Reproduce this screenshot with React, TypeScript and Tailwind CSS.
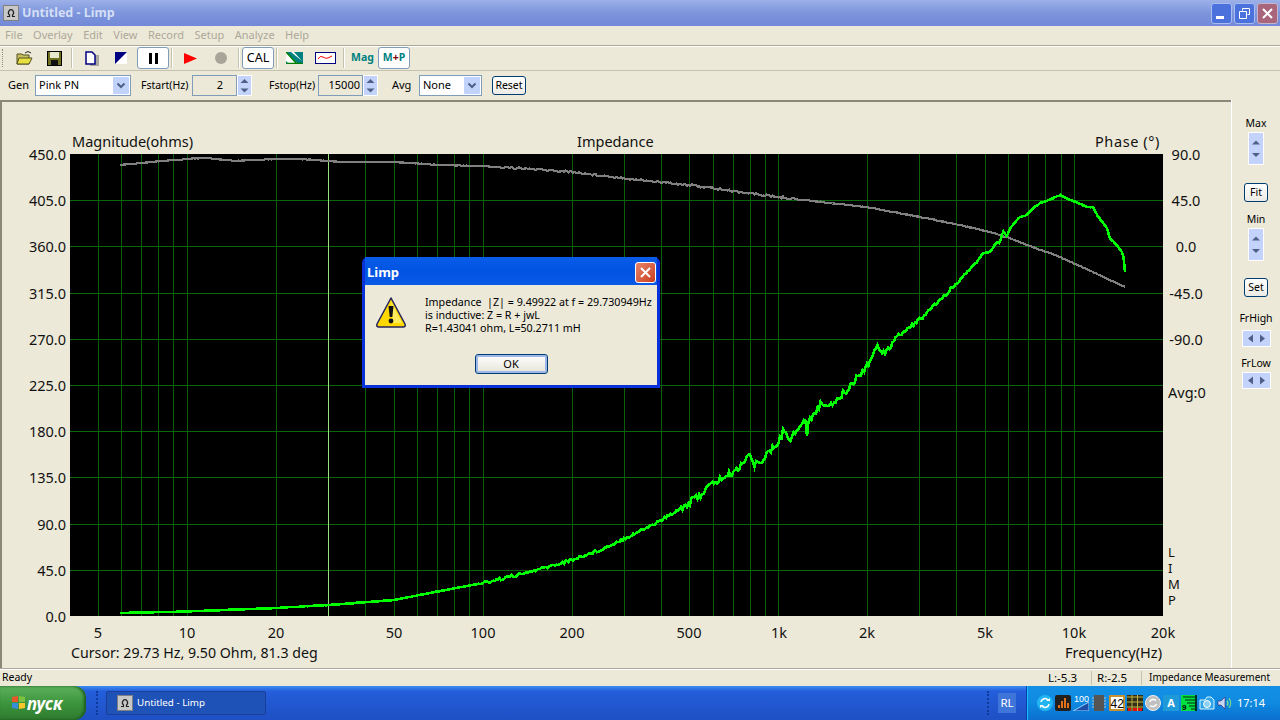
import React from "react";

const X0 = 70;
const Y0 = 154;
const PW = 1093;
const PH = 462;

const freqX = (f: number) => Math.round(187 + 295.7 * Math.log10(f / 10) - X0);

const vLines = [5, 6, 7, 8, 9, 10, 20, 30, 40, 50, 60, 70, 80, 90, 100, 200, 300, 400, 500, 600, 700, 800, 900, 1000, 2000, 3000, 4000, 5000, 6000, 7000, 8000, 9000, 10000];
const yTicks = ["450.0", "405.0", "360.0", "315.0", "270.0", "225.0", "180.0", "135.0", "90.0", "45.0", "0.0"];
const xLabels: [string, number][] = [["5", 98], ["10", 187], ["20", 276], ["50", 394], ["100", 483], ["200", 572], ["500", 689], ["1k", 779], ["2k", 867], ["5k", 985], ["10k", 1074], ["20k", 1163]];

const greenKeys: [number, number][] = [[120, 613], [187, 611.5], [276, 608], [328, 605], [394, 600], [440, 591], [483, 583], [530, 572], [572, 560], [600, 550], [640, 531], [660, 521], [689, 503], [700, 495], [712, 484], [737, 470], [749, 453], [754, 466], [767, 455], [778, 443], [785, 428], [790, 440], [800, 425], [806, 420], [807, 437], [809, 420], [820, 405], [835, 402], [845, 392], [867, 365], [878, 346], [884, 352], [900, 335], [925, 315], [955, 285], [967, 272], [977, 262], [983, 253], [990, 252], [997, 242], [1000, 243], [1003, 230], [1007, 237], [1010, 228], [1015, 222], [1020, 217], [1027, 215], [1033, 208], [1040, 203], [1050, 200], [1060, 195], [1067, 198], [1073, 201], [1087, 207], [1093, 207], [1097, 215], [1107, 228], [1110, 238], [1118, 247], [1123, 253], [1125, 272]];
const grayKeys: [number, number][] = [[120, 165], [140, 163], [187, 159], [205, 158], [235, 161], [276, 159], [300, 159], [328, 161], [345, 162], [394, 162], [440, 165], [483, 166], [530, 169], [572, 172], [640, 180], [689, 185], [740, 192], [779, 197], [830, 203], [867, 207], [925, 218], [960, 225], [977, 229], [993, 233], [1010, 238], [1027, 245], [1060, 257], [1093, 272], [1125, 287]];

function lerp(keys: [number, number][], x: number) {
  for (let i = 1; i < keys.length; i++) {
    if (x <= keys[i][0]) {
      const [a, b] = keys[i - 1];
      const [c, d] = keys[i];
      return b + ((d - b) * (x - a)) / (c - a);
    }
  }
  return keys[keys.length - 1][1];
}

// small repeatable noise so the traces look measured
function rand(i: number) {
  const s = Math.sin(i * 12.9898) * 43758.5453;
  return s - Math.floor(s) - 0.5;
}

function curve(keys: [number, number][], amp: (x: number) => number) {
  const pts: string[] = [];
  const end = keys[keys.length - 1][0];
  for (let x = keys[0][0], i = 0; x <= end; x += 1.5, i++) {
    pts.push(`${(x - X0).toFixed(1)},${(lerp(keys, x) + rand(i) * amp(x) - Y0).toFixed(1)}`);
  }
  return pts.join(" ");
}

const greenPts = curve(greenKeys, (x) => (x < 480 ? 0.3 : x < 680 ? 3 : x < 900 ? 7 : x < 960 ? 3.5 : 1));
const grayPts = curve(grayKeys, (x) => (x < 500 ? 0.5 : x < 800 ? 2 : 0.7));

function Chart() {
  return (
    <svg width={PW} height={PH} className="block shrink-0 bg-black" shapeRendering="crispEdges">
      {vLines.map((f) => (
        <line key={f} x1={freqX(f) + 0.5} x2={freqX(f) + 0.5} y1={0} y2={PH} stroke="#0a5f0a" strokeWidth={1} />
      ))}
      {yTicks.slice(1, -1).map((_, i) => (
        <line key={i} x1={0} x2={PW} y1={Math.round(46.2 * (i + 1)) + 0.5} y2={Math.round(46.2 * (i + 1)) + 0.5} stroke="#0a660a" strokeWidth={1} />
      ))}
      <line x1={258.5} x2={258.5} y1={0} y2={PH} stroke="#98e080" strokeWidth={1} />
      <polyline points={grayPts} fill="none" stroke="#808080" strokeWidth={2.2} />
      <polyline points={greenPts} fill="none" stroke="#00ff00" strokeWidth={2.6} />
    </svg>
  );
}

function UpDown({ w = 15, h = 21 }: { w?: number; h?: number }) {
  return (
    <svg width={w} height={h} className="block shrink-0">
      <rect width={w} height={h} fill="#fff" />
      <rect x={1} y={1} width={w - 2} height={h - 2} fill="#c4d3fb" />
      <path d={`M${w / 2 - 4} ${h * 0.38}l4-4 4 4z`} fill="#4d6185" />
      <path d={`M${w / 2 - 4} ${h * 0.64}l4 4 4-4z`} fill="#4d6185" />
    </svg>
  );
}

function LeftRight() {
  return (
    <svg width={29} height={17} className="block">
      <rect width={29} height={17} fill="#fff" />
      <rect x={1} y={1} width={27} height={15} fill="#c4d3fb" />
      <path d="M11 4.500l-5 4 5 4z" fill="#4d6185" />
      <path d="M18 4.500l5 4-5 4z" fill="#4d6185" />
    </svg>
  );
}

function Combo({ text, w }: { text: string; w: string }) {
  return (
    <div className={`flex h-[21px] items-center justify-between border border-[#7f9db9] bg-white pr-px pl-[3px] text-[11px] text-black ${w}`}>
      <span>{text}</span>
      <svg width={16} height={17} className="block">
        <rect width={16} height={17} rx={1} fill="#c1d3fb" />
        <path d="M4.500 6.500l3.500 3.500 3.500-3.500" fill="none" stroke="#4d6185" strokeWidth={2} />
      </svg>
    </div>
  );
}

function XpButton({ children, className }: { children: React.ReactNode; className: string }) {
  return (
    <div className={`flex items-center justify-center rounded-[3px] border border-[#003c74] bg-gradient-to-b from-white to-[#ecebe5] text-black ${className}`}>
      {children}
    </div>
  );
}

function Sep() {
  return <div className="h-[20px] w-[2px] shrink-0 border-r border-white bg-[#c5c2b0]" />;
}

function ToolButton({ children, className }: { children: React.ReactNode; className: string }) {
  return (
    <div className={`flex h-[22px] shrink-0 items-center justify-center rounded-[3px] border border-[#7f9db9] bg-white ${className}`}>
      {children}
    </div>
  );
}

function AppIcon({ size = 16 }: { size?: number }) {
  return (
    <svg width={size} height={size} viewBox="0 0 16 16" className="block shrink-0">
      <rect width={16} height={16} fill="#c8c8c8" />
      <rect x={0.5} y={0.5} width={15} height={15} fill="none" stroke="#808080" />
      <path d="M4 11.500h2.500v-1.500a2.500 3 0 1 1 3 0v1.500h2.500" fill="none" stroke="#202020" strokeWidth={1.2} />
    </svg>
  );
}

function WarningIcon() {
  return (
    <svg width={32} height={33} viewBox="0 0 32 33" className="block shrink-0">
      <path d="M16 2L30 28q1 3-2 3H4q-3 0-2-3z" fill="#ffd800" stroke="#23235f" strokeWidth={1.5} strokeLinejoin="round" />
      <path d="M16 5L27 27H18z" fill="#ffec5c" />
      <path d="M13.500 10h5l-1.200 11h-2.600z" fill="#111" />
      <circle cx={16} cy={25} r={2.400} fill="#111" />
    </svg>
  );
}

function Tray() {
  return (
    <div className="flex h-full w-[254px] items-center border-l border-[#0a3ea8] bg-gradient-to-b from-[#1390e6] via-[#0f8ae0] to-[#0c6fd0] pl-[10px] shadow-[inset_1px_0_0_#18bbff]">
      <svg width={16} height={16} className="ml-0 block shrink-0">
        <circle cx={8} cy={8} r={8} fill="#23b5f2" />
        <path d="M4 7a4 4 0 0 1 7-2M12 9a4 4 0 0 1-7 2" fill="none" stroke="#fff" strokeWidth={1.600} />
        <path d="M9 6h4V3zM7 10H3v3z" fill="#fff" />
      </svg>
      <svg width={16} height={16} className="ml-[2px] block shrink-0">
        <rect width={16} height={16} rx={2} fill="#202020" />
        <path d="M3 13h2v-3H3zM6 13h2V6H6zM9 13h2V3H9zM12 13h2V8h-2z" fill="#e0701a" />
      </svg>
      <svg width={16} height={16} className="ml-[2px] block shrink-0">
        <path d="M0 16L16 7v9z" fill="#1e4fa8" stroke="#8fd0ff" />
        <text x={1} y={7} fontSize={9} fill="#fff" fontFamily="Liberation Sans">100</text>
      </svg>
      <svg width={16} height={16} className="ml-[2px] block shrink-0">
        <path d="M1 3h14M1 6h14M1 9h14M1 12h14" stroke="#c0c0c0" />
        <rect x={3} y={0} width={10} height={16} fill="#555" />
      </svg>
      <svg width={16} height={16} className="ml-[2px] block shrink-0">
        <rect width={16} height={16} rx={1} fill="#c89030" />
        <rect x={2} y={2} width={12} height={12} fill="#fff" />
        <text x={1.500} y={13} fontSize={12} fill="#000" fontFamily="Liberation Sans">42</text>
      </svg>
      <svg width={16} height={16} className="ml-[2px] block shrink-0">
        <rect width={16} height={16} fill="#303018" />
        <path d="M0 2h16M0 7h16M0 12h16M5 0v16M10.500 0v16" stroke="#c0b040" />
        <path d="M1 13h3v3H1zM6 13h4v3H6zM11 13h4v3h-4z" fill="#e01010" />
      </svg>
      <svg width={16} height={16} className="ml-[2px] block shrink-0">
        <circle cx={8} cy={8} r={7.500} fill="#c0c0c0" stroke="#eee" />
        <path d="M4.500 7a4 4 0 0 1 6.500-1.500M11.500 9a4 4 0 0 1-6.500 1.500" fill="none" stroke="#fff" strokeWidth={1.500} />
      </svg>
      <div className="ml-[2px] flex h-4 w-4 shrink-0 items-center justify-center bg-[#1e9ad8] text-[11px] font-bold text-white">A</div>
      <svg width={16} height={16} className="ml-[2px] block shrink-0">
        <rect width={16} height={16} fill="#00e040" />
        <path d="M2 2h12M4 5h10M6 8h8M8 11h6M10 14h4" stroke="#062" strokeWidth={1.500} />
        <text x={1} y={15} fontSize={8} fontWeight={700} fill="#000" fontFamily="Liberation Sans">9</text>
        <rect x={14} width={2} height={16} fill="#003020" />
      </svg>
      <svg width={16} height={16} className="ml-[2px] block shrink-0">
        <path d="M1 5h5l2-3h4l3 3v9H1z" fill="#2ea4e8" stroke="#d8f4ff" />
        <circle cx={8} cy={9} r={3.500} fill="#8ad0f4" stroke="#fff" />
      </svg>
      <svg width={16} height={16} className="ml-[2px] block shrink-0">
        <path d="M1 6h3l4-4v12l-4-4H1z" fill="#c8d8f0" stroke="#305" strokeWidth={0.5} />
        <path d="M10 5.500a4 4 0 0 1 0 5M12 3.500a7 7 0 0 1 0 9" fill="none" stroke="#80e080" strokeWidth={1.200} />
      </svg>
      <span className="ml-[4px] text-[11px] text-white">17:14</span>
    </div>
  );
}

export default function App() {
  return (
    <div className="relative flex h-[720px] w-[1280px] flex-col overflow-hidden bg-[#ece9d8] font-['Liberation_Sans',sans-serif] text-[12px] text-black">
      {/* Title bar */}
      <div className="flex h-[26px] shrink-0 items-center bg-gradient-to-b from-[#9db0e8] via-[#7c95dc] to-[#7389d8] pr-[2px] pl-[3px]">
        <AppIcon />
        <span className="ml-[3px] text-[12.500px] font-bold text-[#d4dff5]">Untitled - Limp</span>
        <div className="ml-auto flex gap-[2px]">
          <div className="flex h-[21px] w-[21px] items-end rounded-[3px] border border-[#a9bdf0] bg-[#4a71dc] pb-[4px] pl-[4px]">
            <div className="h-[3px] w-[8px] bg-white" />
          </div>
          <div className="flex h-[21px] w-[21px] items-center justify-center rounded-[3px] border border-[#a9bdf0] bg-[#4a71dc]">
            <svg width={11} height={11}>
              <path d="M3.500 2.500v-2h7v6h-2M.5 3.500h7v7h-7z" fill="none" stroke="#fff" />
            </svg>
          </div>
          <div className="flex h-[21px] w-[21px] items-center justify-center rounded-[3px] border border-[#c8b4c8] bg-[#a8657c]">
            <svg width={11} height={11}>
              <path d="M1 1l9 9M10 1l-9 9" stroke="#fff" strokeWidth={2} />
            </svg>
          </div>
        </div>
      </div>

      {/* Menu */}
      <div className="flex h-[19px] shrink-0 items-center gap-[10.500px] pl-[5px] text-[11px] text-[#aca899]">
        {["File", "Overlay", "Edit", "View", "Record", "Setup", "Analyze", "Help"].map((m) => (
          <span key={m}>{m}</span>
        ))}
      </div>

      {/* Toolbar */}
      <div className="flex h-[26px] shrink-0 items-center border-t border-b border-t-[#aca899] border-b-[#c5c2b0] shadow-[inset_0_1px_0_#fff]">
        <div className="ml-[2px] h-[18px] w-[2px] shrink-0 border-l border-dotted border-[#8a8a80]" />
        <svg width={17} height={16} className="ml-[12px] block shrink-0">
          <path d="M1 4h5l1 1h6v9H1z" fill="#c8c060" stroke="#505020" />
          <path d="M3 8h13l-3 6H1z" fill="#e8e040" stroke="#505020" />
          <path d="M9 3q3-3 6 0" fill="none" stroke="#222" />
        </svg>
        <svg width={15} height={15} className="ml-[14px] block shrink-0">
          <rect x={0.5} y={0.5} width={14} height={14} fill="#707020" stroke="#000" />
          <rect x={3} y={1} width={9} height={6} fill="#e8e8d0" />
          <rect x={4} y={9} width={7} height={5} fill="#101010" />
        </svg>
        <div className="ml-[9px]"><Sep /></div>
        <svg width={14} height={15} className="ml-[12px] block shrink-0">
          <rect x={5} y={4} width={9} height={11} fill="#a8a8a0" />
          <path d="M1 1h6l3 3v9H1z" fill="#fff" stroke="#000080" strokeWidth={1.500} />
        </svg>
        <svg width={12} height={12} className="ml-[16px] block shrink-0">
          <rect width={12} height={12} fill="#fff" />
          <path d="M0 0h12L0 12z" fill="#000080" />
        </svg>
        <ToolButton className="ml-[10px] w-[32px] gap-[3px]">
          <div className="h-[11px] w-[3px] bg-black" />
          <div className="h-[11px] w-[3px] bg-black" />
        </ToolButton>
        <div className="ml-[2px]"><Sep /></div>
        <svg width={13} height={11} className="ml-[11px] block shrink-0">
          <path d="M0 0l13 5.500L0 11z" fill="#ff0000" />
        </svg>
        <div className="ml-[18px] h-[12px] w-[12px] shrink-0 rounded-full bg-[#a8a498]" />
        <div className="ml-[11px]"><Sep /></div>
        <ToolButton className="ml-[2px] w-[32px] text-[12.500px]">CAL</ToolButton>
        <div className="ml-[2px]"><Sep /></div>
        <svg width={17} height={12} className="ml-[8px] block shrink-0">
          <rect width={17} height={12} fill="#008080" />
          <path d="M0 0l12 12H3L0 9zM5 0h3l8 9" fill="#fff" />
          <path d="M0 0l11 12M.5 11.500h16" stroke="#008000" strokeWidth={1.500} fill="none" />
        </svg>
        <svg width={21} height={12} className="ml-[12px] block shrink-0">
          <rect x={0.5} y={0.5} width={20} height={11} fill="#fff" stroke="#000080" />
          <path d="M3 7q2-4 5-2t5 1 4-2" fill="none" stroke="#ff0000" />
        </svg>
        <div className="ml-[7px]"><Sep /></div>
        <span className="ml-[6px] w-[23px] shrink-0 text-[10.500px] font-bold text-[#008080]">Mag</span>
        <ToolButton className="ml-[4px] w-[32px] text-[10.500px] font-bold text-[#008080]">
          M<span className="text-[#800000]">+</span>P
        </ToolButton>
      </div>

      {/* Generator row */}
      <div className="flex h-[29px] shrink-0 items-center text-[11px]">
        <span className="ml-[8px] w-[27px] shrink-0">Gen</span>
        <Combo text="Pink PN" w="w-[96px]" />
        <span className="ml-[10px] w-[51px] shrink-0 text-[10.500px]">Fstart(Hz)</span>
        <div className="flex h-[21px] w-[45px] items-center justify-end border border-[#7f9db9] pr-[13px]">2</div>
        <UpDown />
        <span className="ml-[17px] w-[49px] shrink-0 text-[10.500px]">Fstop(Hz)</span>
        <div className="flex h-[21px] w-[45px] items-center justify-end border border-[#7f9db9] pr-[2px]">15000</div>
        <UpDown />
        <span className="ml-[14px] w-[27px] shrink-0">Avg</span>
        <Combo text="None" w="w-[63px]" />
        <XpButton className="ml-[10px] h-[19px] w-[34px] text-[10.500px]">Reset</XpButton>
      </div>

      {/* Main */}
      <div className="flex min-h-0 flex-1">
        <div className="flex w-[1231px] shrink-0 flex-col border-t-2 border-l-2 border-t-[#8a8878] border-l-[#8a8878] text-[14.500px] text-[#111]">
          <div className="flex h-[52px] shrink-0 items-end pb-[1px] pl-[70px]">
            <span className="w-[505px]">Magnitude(ohms)</span>
            <span className="w-[518px]">Impedance</span>
            <span className="tracking-[0.6px]">Phase (°)</span>
          </div>
          <div className="flex h-[462px] shrink-0">
            <div className="-mt-[8px] flex h-[479px] w-[68px] shrink-0 flex-col justify-between pr-[4px] text-right leading-[17px]">
              {yTicks.map((t) => (
                <span key={t}>{t}</span>
              ))}
            </div>
            <Chart />
            <div className="relative w-[60px] shrink-0">
              {["90.0", "45.0", "0.0", "-45.0", "-90.0"].map((t, i) => (
                <span key={t} className="absolute w-[46px] text-center leading-[17px]" style={{ top: 46.2 * i - 8 }}>{t}</span>
              ))}
              <span className="absolute top-[230px] left-[5px] leading-[17px]">Avg:0</span>
              <div className="absolute top-[390px] left-[5px] flex flex-col text-[13px] leading-[16px]">
                <span>L</span>
                <span>I</span>
                <span>M</span>
                <span>P</span>
              </div>
            </div>
          </div>
          <div className="relative h-[28px] shrink-0">
            {xLabels.map(([t, x]) => (
              <span key={t} className="absolute top-[6px] -translate-x-1/2" style={{ left: x - 2 }}>{t}</span>
            ))}
          </div>
          <div className="flex items-center justify-between pr-[69px] pl-[69px] leading-[17px]">
            <span className="text-[14.200px]">Cursor: 29.73 Hz, 9.50 Ohm, 81.3 deg</span>
            <span>Frequency(Hz)</span>
          </div>
        </div>

        {/* Side controls */}
        <div className="flex flex-1 flex-col items-center border-l border-white pt-[16px] text-[10.500px]">
          <span className="leading-[14px]">Max</span>
          <div className="mt-[2px]"><UpDown w={16} h={33} /></div>
          <XpButton className="mt-[18px] h-[19px] w-[24px]">Fit</XpButton>
          <span className="mt-[10px] leading-[14px]">Min</span>
          <div className="mt-[2px]"><UpDown w={16} h={33} /></div>
          <XpButton className="mt-[17px] h-[19px] w-[24px]">Set</XpButton>
          <span className="mt-[14px] leading-[14px]">FrHigh</span>
          <div className="mt-[5px]"><LeftRight /></div>
          <span className="mt-[9px] leading-[14px]">FrLow</span>
          <div className="mt-[2px]"><LeftRight /></div>
        </div>
      </div>

      {/* Status bar */}
      <div className="flex h-[18px] shrink-0 items-center border-t border-[#aca899] text-[11.500px] shadow-[inset_0_1px_0_#fff]">
        <span className="ml-[2px] text-[10.500px]">Ready</span>
        <span className="ml-auto w-[43px] shrink-0">L:-5.3</span>
        <div className="h-[14px] w-px bg-[#c5c2b0]" />
        <span className="ml-[5px] w-[44px] shrink-0">R:-2.5</span>
        <div className="h-[14px] w-px bg-[#c5c2b0]" />
        <span className="ml-[7px] w-[131px] shrink-0 text-[10px] whitespace-nowrap">Impedance Measurement</span>
      </div>

      {/* Taskbar */}
      <div className="flex h-[34px] shrink-0 items-center bg-gradient-to-b from-[#3f8cf3] via-[#245edb] via-15% to-[#1f50c4] text-white">
        <div className="flex h-full w-[86px] shrink-0 items-center rounded-r-[12px] bg-gradient-to-b from-[#5db05d] via-[#3c963c] to-[#2f7a2f] pl-[12px] shadow-[inset_-2px_0_3px_#1c5a1c]">
          <svg width={14} height={14} className="block shrink-0">
            <path d="M0 1l6-1v6H0z" fill="#e8562a" />
            <path d="M7 0l6 1v5H7z" fill="#7cc242" />
            <path d="M0 7h6v6l-6-1z" fill="#3a8ed8" />
            <path d="M7 7h6v5l-6 1z" fill="#fbc82a" />
          </svg>
          <span className="ml-px text-[17px] leading-none font-bold italic">пуск</span>
        </div>
        <div className="ml-[10px] h-[24px] w-[3px] border-l-2 border-dotted border-[#0f3a9c]" />
        <div className="ml-[7px] flex h-[24px] w-[160px] shrink-0 items-center rounded-[2px] border border-[#1a3f98] bg-[#1e52b7] pl-[10px] text-[9.800px]">
          <AppIcon />
          <span className="ml-[4px]">Untitled - Limp</span>
        </div>
        <div className="ml-[721px] h-[24px] w-[3px] border-l-2 border-dotted border-[#0f3a9c]" />
        <div className="ml-[8px] flex h-[20px] w-[18px] shrink-0 items-center justify-center bg-[#3f74d8] text-[11.500px]">RL</div>
        <div className="ml-auto h-full"><Tray /></div>
      </div>

      {/* Message box */}
      <div className="absolute top-[257px] left-[362px] flex h-[131px] w-[298px] flex-col rounded-t-[6px] bg-[#0831d9] px-[3px] pb-[3px]">
        <div className="flex h-[28px] shrink-0 items-center bg-gradient-to-b from-[#0a5ce8] via-[#0054e3] to-[#0a5ae6] pt-[3px] pr-[1px] pl-[2px]">
          <span className="text-[13px] font-bold text-white">Limp</span>
          <div className="ml-auto flex h-[21px] w-[21px] items-center justify-center rounded-[3px] border border-white bg-gradient-to-br from-[#e8846a] to-[#c83c18]">
            <svg width={11} height={11}>
              <path d="M1 1l9 9M10 1l-9 9" stroke="#fff" strokeWidth={2} />
            </svg>
          </div>
        </div>
        <div className="flex min-h-0 flex-1 flex-col bg-[#ece9d8]">
          <div className="flex pt-[11px] pl-[10px]">
            <WarningIcon />
            <div className="ml-[18px] text-[10.700px] leading-[13px] whitespace-pre">
              <div>Impedance  |Z| = 9.49922 at f = 29.730949Hz</div>
              <div>is inductive: Z = R + jwL</div>
              <div>R=1.43041 ohm, L=50.2711 mH</div>
            </div>
          </div>
          <div className="mt-[19px] flex justify-center">
            <div className="flex h-[20px] w-[73px] items-center justify-center rounded-[3px] border border-[#003c74] bg-gradient-to-b from-white to-[#e6e4d8] text-[11px] shadow-[inset_0_0_0_2px_#9db8e8]">OK</div>
          </div>
        </div>
      </div>
    </div>
  );
}
